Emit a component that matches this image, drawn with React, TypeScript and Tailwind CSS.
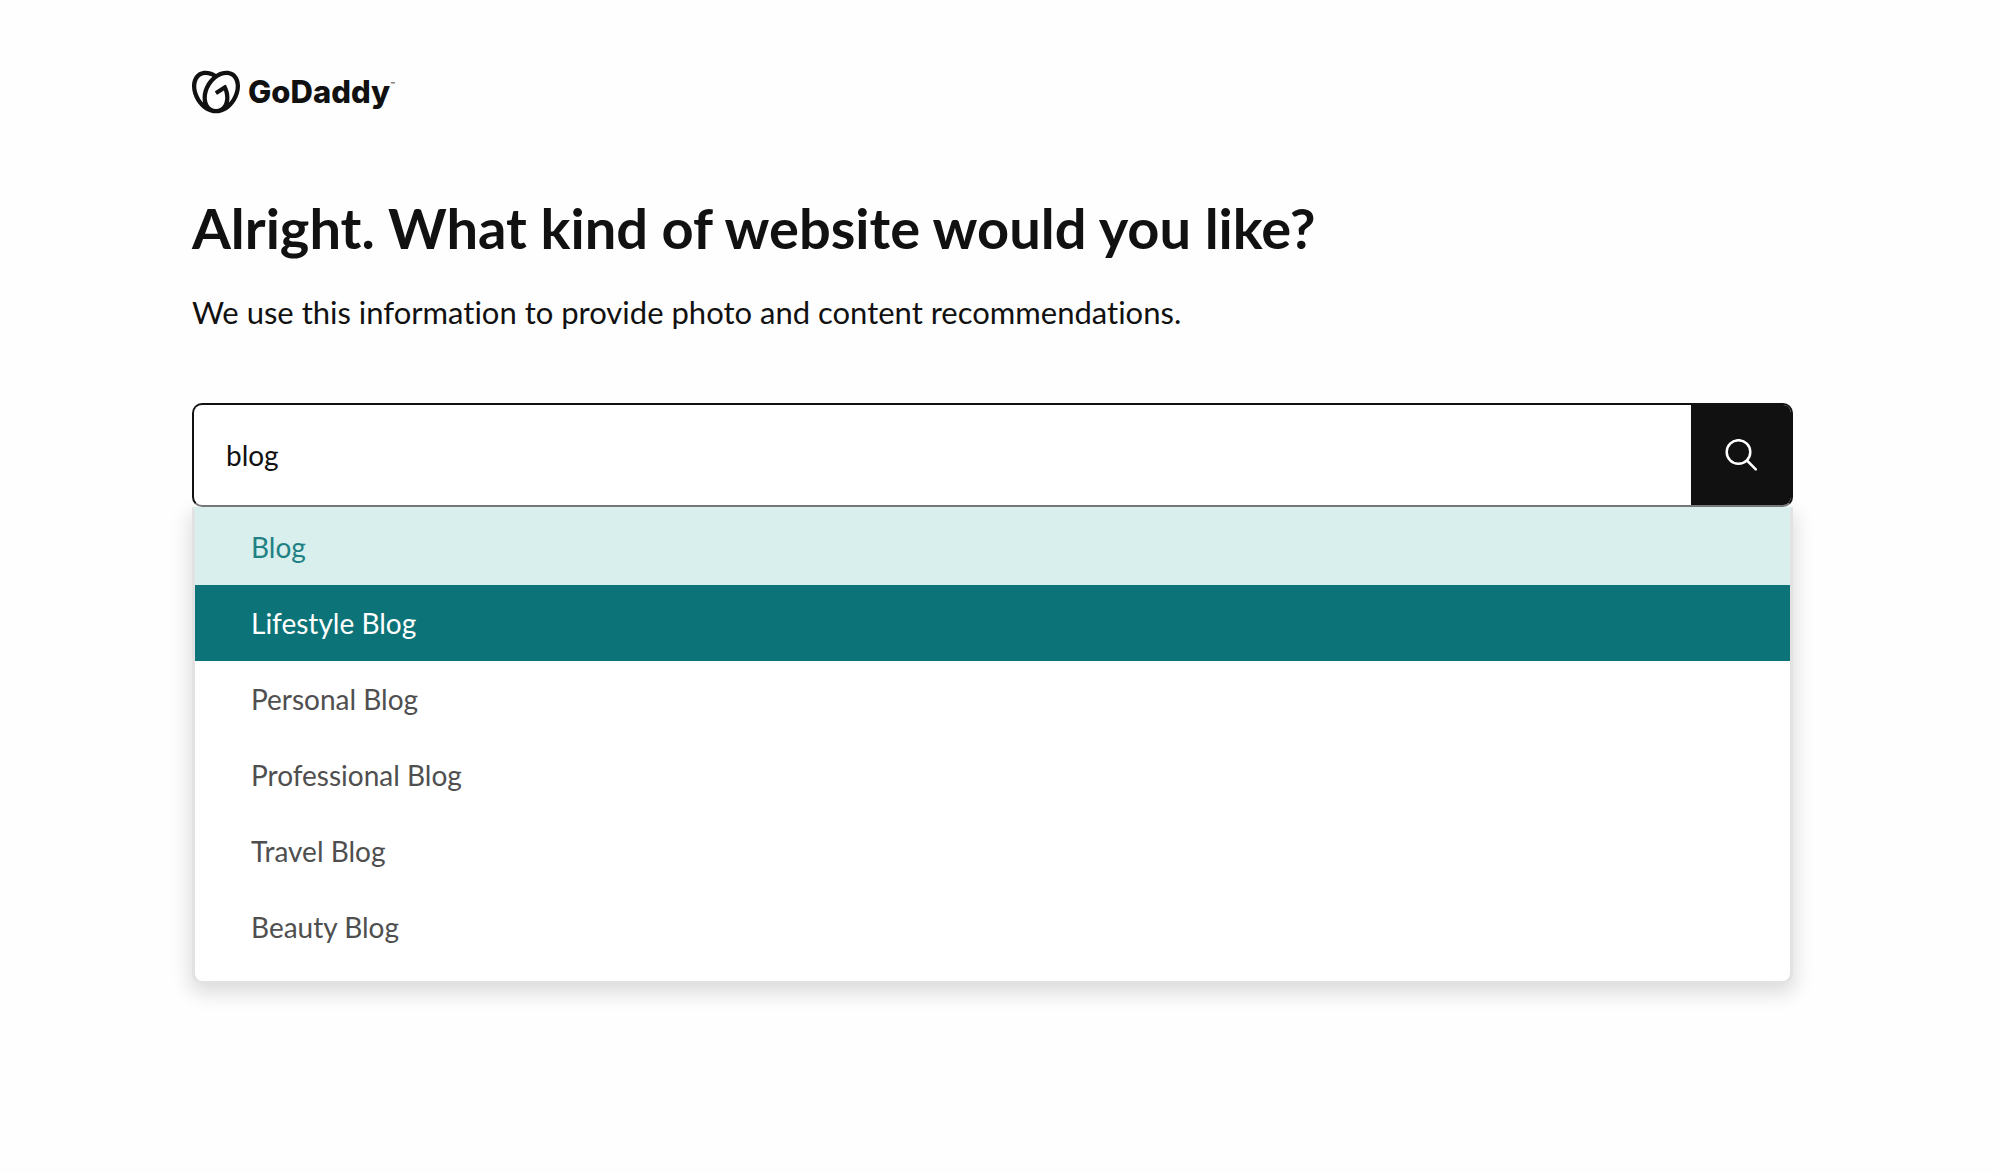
import { useState } from "react";
import { SiGodaddy } from "react-icons/si";

const suggestions = [
  "Blog",
  "Lifestyle Blog",
  "Personal Blog",
  "Professional Blog",
  "Travel Blog",
  "Beauty Blog",
];

function itemColors(index: number) {
  if (index === 0) return "bg-[#d8efed] text-[#1f8184]";
  if (index === 1) return "bg-[#0c7478] text-white";
  return "bg-white text-[#4f4f4f]";
}

function SearchIcon() {
  return (
    <svg viewBox="0 0 32 32" className="size-8" fill="none" stroke="currentColor" strokeWidth="2.5" strokeLinecap="round" aria-hidden="true">
      <circle cx="13.5" cy="13" r="11.8" />
      <path d="M22 21.5l8.8 8.8" />
    </svg>
  );
}

export default function App() {
  const [query, setQuery] = useState("blog");

  return (
    <main className="min-h-screen bg-[#fefefe] pt-17 pr-[206px] pb-16 pl-48 font-['Lato',sans-serif] text-[#111] [font-variant-ligatures:none]">
      <a href="#" aria-label="GoDaddy home" className="flex h-12 w-fit items-center">
        <SiGodaddy className="size-12" aria-hidden="true" />
        <span className="ml-2 font-['Inter',sans-serif] text-[31px] leading-12 font-extrabold">GoDaddy</span>
        <span className="self-start pt-3 text-[6px] leading-2">™</span>
      </a>

      <h1 className="mt-20 text-[56px] leading-16 font-bold">Alright. What kind of website would you like?</h1>
      <p className="mt-8 text-[31px] leading-10">
        We use this information to provide photo and content recommendations.
      </p>

      <form className="mt-[71px]" onSubmit={(e) => e.preventDefault()}>
        <div className="relative z-10 flex h-26 overflow-hidden rounded-[10px] border-2 border-[#111] border-b-[#777] bg-white">
          <input
            type="text"
            aria-label="Kind of website"
            value={query}
            onChange={(e) => setQuery(e.target.value)}
            className="min-w-0 flex-1 px-8 text-[28px] outline-none"
          />
          <button type="submit" aria-label="Search" className="flex w-[100px] items-center justify-center bg-[#111] text-white">
            <SearchIcon />
          </button>
        </div>
        <ul
          role="listbox"
          aria-label="Suggestions"
          className="overflow-hidden rounded-b-[10px] border-x-3 border-t-2 border-b-2 border-[#e2e2e2] border-t-[#d8efed] bg-white pb-4 shadow-[0_8px_20px_2px_rgba(0,0,0,0.14)]"
        >
          {suggestions.map((name, index) => (
            <li
              key={name}
              role="option"
              aria-selected={index === 1}
              className={`flex h-19 items-center px-14 text-[28px] ${itemColors(index)}`}
            >
              {name}
            </li>
          ))}
        </ul>
      </form>
    </main>
  );
}
